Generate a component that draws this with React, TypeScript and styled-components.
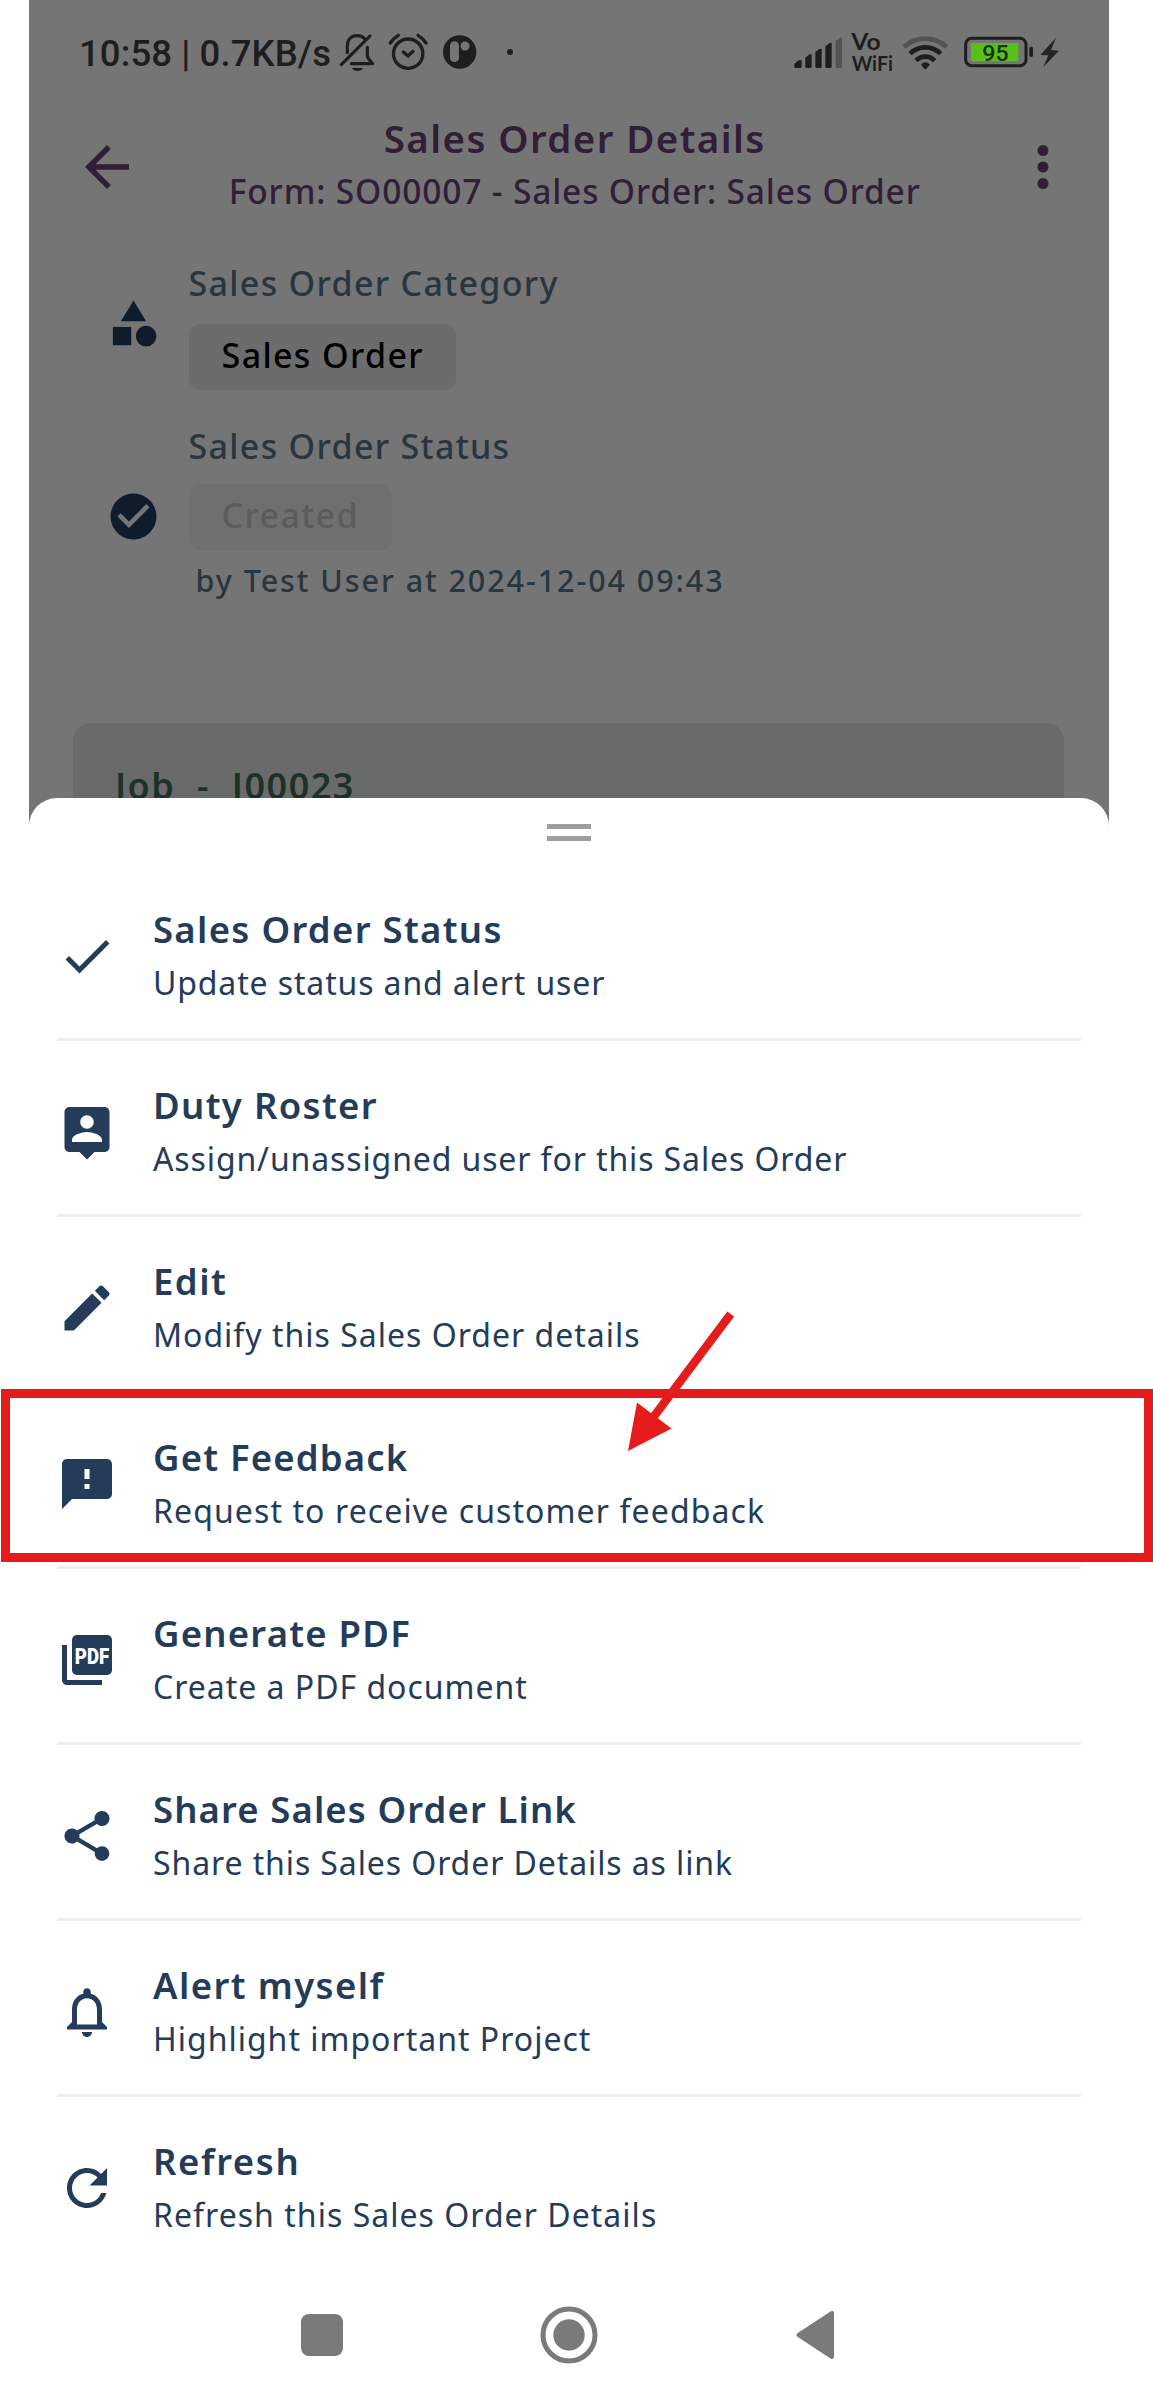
import React from "react";
import styled, { createGlobalStyle } from "styled-components";

const NAVY = "#243c5a";
const RED = "#e61c1c";
const INK = "#1e1e1e";
const DIMMED = "#757575";
const PLUM = "#311f38";

const GlobalStyle = createGlobalStyle`
  *, *::before, *::after { box-sizing: border-box; }
  body { margin: 0; background: #fff; }
`;

const Page = styled.div`
  position: relative;
  width: 1153px;
  height: 2400px;
  padding-left: 29px;
  overflow: hidden;
  background: #fff;
  font-family: "Noto Sans", "Open Sans", sans-serif;
`;

const Phone = styled.div`
  display: flex;
  flex-direction: column;
  width: 1080px;
  height: 2400px;
`;

const Backdrop = styled.div`
  display: flex;
  flex-direction: column;
  flex: none;
  height: 826px;
  overflow: hidden;
  background: ${DIMMED};
`;

/* Status bar */

const StatusBar = styled.div`
  display: flex;
  align-items: flex-start;
  flex: none;
  height: 111.6px;
  padding: 20px 49.7px 0 50px;
`;

const NetworkText = styled.span`
  flex: none;
  width: 260px;
  font: 500 36.5px/43px Roboto, sans-serif;
  letter-spacing: 0.1px;
  white-space: nowrap;
  color: ${INK};
  padding-top: 12px;
`;

const StatusIcon = styled.svg<{ $gap?: string }>`
  flex: none;
  height: 65px;
  margin-left: ${(p) => p.$gap ?? "0"};
  overflow: visible;
`;

/* App header */

const Header = styled.header`
  display: flex;
  align-items: center;
  flex: none;
  height: 106px;
  padding: 0 33px 0 44.5px;
  color: ${PLUM};
`;

const HeaderIcon = styled.svg`
  flex: none;
  width: 66px;
  height: 66px;
  margin-top: 5px;
  fill: currentColor;
`;

const HeaderTitles = styled.div`
  flex: 1;
  text-align: center;
  white-space: nowrap;
`;

const HeaderTitle = styled.h1`
  margin: 0;
  font-size: 38.5px;
  font-weight: 600;
  line-height: 52px;
  letter-spacing: 1.4px;
`;

const HeaderSubtitle = styled.p`
  margin: 0;
  font-size: 33.5px;
  font-weight: 500;
  line-height: 54px;
  letter-spacing: 0.85px;
`;

/* Order details */

const Detail = styled.section<{ $top: string }>`
  display: flex;
  flex: none;
  margin-top: ${(p) => p.$top};
  padding-left: 77px;
`;

const DetailIcon = styled.svg<{ $top: string }>`
  flex: none;
  width: 55px;
  height: 55px;
  margin: ${(p) => p.$top} 27.6px 0 0;
  fill: #0f1c2b;
`;

const DetailBody = styled.div`
  display: flex;
  flex-direction: column;
  align-items: flex-start;
  white-space: nowrap;
`;

const DetailLabel = styled.div<{ $gap: string }>`
  margin-bottom: ${(p) => p.$gap};
  font-size: 34px;
  font-weight: 500;
  line-height: 54px;
  letter-spacing: 1.3px;
  color: #29353f;
`;

const Pill = styled.div<{ $muted?: boolean; $width: string }>`
  width: ${(p) => p.$width};
  height: 66px;
  padding: 4px 0 0 33px;
  border-radius: 11px;
  background: ${(p) => (p.$muted ? "#6f6f6f" : "#6c6c6c")};
  font-size: 34px;
  font-weight: 500;
  line-height: 54px;
  letter-spacing: 1.35px;
  color: ${(p) => (p.$muted ? "#5c5c5c" : "#000")};
`;

const Byline = styled.div`
  margin-top: 6px;
  padding-left: 7px;
  font-size: 30.5px;
  font-weight: 500;
  line-height: 48px;
  letter-spacing: 1.93px;
  color: #29353f;
`;

const JobCard = styled.section`
  flex: none;
  height: 160px;
  margin: 119px 45px 0 44px;
  padding: 36.6px 0 0 42px;
  border-radius: 18px;
  background: #696b6a;
  font-size: 36px;
  font-weight: 600;
  line-height: 54px;
  letter-spacing: 1.5px;
  white-space: pre;
  color: #1e3128;
`;

/* Bottom sheet */

const Sheet = styled.div`
  display: flex;
  flex-direction: column;
  flex: 1;
  margin-top: -28px;
  border-radius: 28px 28px 0 0;
  background: #fff;
`;

const Handle = styled.div`
  align-self: center;
  flex: none;
  width: 44px;
  height: 17px;
  margin: 25.5px 0 24.5px;
  border: solid #9e9e9e;
  border-width: 5.5px 0;
`;

const Menu = styled.ul`
  margin: 0 28px;
  padding: 0;
  list-style: none;
`;

const MenuItem = styled.li`
  display: flex;
  align-items: flex-start;
  height: 176px;
  padding-top: 36px;
  border-bottom: 3px solid #eee;
  color: ${NAVY};

  &:last-child {
    border-bottom: 0;
  }
`;

const MenuIcon = styled.svg`
  flex: none;
  width: 60px;
  height: 60px;
  margin: 25px 36px 0 0;
  fill: currentColor;
`;

const MenuText = styled.div`
  padding-top: 1px;
  white-space: nowrap;
`;

const MenuTitle = styled.div<{ $track: number }>`
  font-size: 36.5px;
  font-weight: 600;
  line-height: 54px;
  letter-spacing: ${(p) => p.$track}px;
`;

const MenuNote = styled.div<{ $track: number }>`
  font-size: 32px;
  font-weight: 400;
  line-height: 53px;
  letter-spacing: ${(p) => p.$track}px;
`;

const NavBar = styled.nav`
  display: flex;
  align-items: center;
  justify-content: center;
  gap: 197.5px;
  height: 58px;
  margin-top: 33px;
  padding-right: 3px;
  fill: #7a7a7a;
`;

/* Callout drawn over the screen */

const CalloutBox = styled.div`
  position: absolute;
  top: 1389px;
  left: 1px;
  width: 1152px;
  height: 173px;
  border: 9px solid ${RED};
`;

const CalloutArrow = styled.svg`
  position: absolute;
  top: 1305px;
  left: 620px;
  width: 120px;
  height: 150px;
`;

type Entry = {
  title: string;
  note: string;
  titleTrack: number;
  noteTrack: number;
  icon: React.ReactNode;
};

const entries: Entry[] = [
  {
    title: "Sales Order Status",
    note: "Update status and alert user",
    titleTrack: 1.3,
    noteTrack: 0.87,
    icon: <path d="M9 16.17L4.83 12l-1.42 1.41L9 19 21 7l-1.41-1.41z" />,
  },
  {
    title: "Duty Roster",
    note: "Assign/unassigned user for this Sales Order",
    titleTrack: 1.33,
    noteTrack: 0.88,
    icon: (
      <path d="M19 2H5c-1.1 0-2 .9-2 2v14c0 1.1.9 2 2 2h4l3 3 3-3h4c1.1 0 2-.9 2-2V4c0-1.1-.9-2-2-2zm-7 3.3c1.49 0 2.7 1.21 2.7 2.7 0 1.49-1.21 2.7-2.7 2.7-1.49 0-2.7-1.21-2.7-2.7 0-1.49 1.21-2.7 2.7-2.7zM18 16H6v-.9c0-2 4-3.1 6-3.1s6 1.1 6 3.1v.9z" />
    ),
  },
  {
    title: "Edit",
    note: "Modify this Sales Order details",
    titleTrack: 1.5,
    noteTrack: 1.0,
    icon: (
      <path d="M3 17.25V21h3.75L17.81 9.94l-3.75-3.75L3 17.25zM20.71 7.04c.39-.39.39-1.02 0-1.41l-2.34-2.34c-.39-.39-1.02-.39-1.41 0l-1.83 1.83 3.75 3.75 1.83-1.83z" />
    ),
  },
  {
    title: "Get Feedback",
    note: "Request to receive customer feedback",
    titleTrack: 1.18,
    noteTrack: 1.1,
    icon: (
      <path d="M20 2H4c-1.1 0-1.99.9-1.99 2L2 22l4-4h14c1.1 0 2-.9 2-2V4c0-1.1-.9-2-2-2zm-7 12h-2v-2h2v2zm0-4h-2V6h2v4z" />
    ),
  },
  {
    title: "Generate PDF",
    note: "Create a PDF document",
    titleTrack: 1.22,
    noteTrack: 0.98,
    icon: (
      <>
        <path d="M4 6H2v14c0 1.1.9 2 2 2h14v-2H4V6z" />
        <rect x="6" y="2" width="16" height="16" rx="1.9" />
        <text
          x="7.1"
          y="13.4"
          fill="#fff"
          fontFamily="Roboto, sans-serif"
          fontSize="8.7"
          fontWeight="900"
          textLength="13.8"
          lengthAdjust="spacingAndGlyphs"
        >
          PDF
        </text>
      </>
    ),
  },
  {
    title: "Share Sales Order Link",
    note: "Share this Sales Order Details as link",
    titleTrack: 1.1,
    noteTrack: 0.9,
    icon: (
      <path d="M18 16.08c-.76 0-1.44.3-1.96.77L8.91 12.7c.05-.23.09-.46.09-.7s-.04-.47-.09-.7l7.05-4.11c.54.5 1.25.81 2.04.81 1.66 0 3-1.34 3-3s-1.34-3-3-3-3 1.34-3 3c0 .24.04.47.09.7L8.04 9.81C7.5 9.31 6.79 9 6 9c-1.66 0-3 1.34-3 3s1.34 3 3 3c.79 0 1.5-.31 2.04-.81l7.12 4.16c-.05.21-.08.43-.08.65 0 1.61 1.31 2.92 2.92 2.92s2.92-1.31 2.92-2.92-1.31-2.92-2.92-2.92z" />
    ),
  },
  {
    title: "Alert myself",
    note: "Highlight important Project",
    titleTrack: 1.4,
    noteTrack: 1.0,
    icon: (
      <path d="M12 22c1.1 0 2-.9 2-2h-4c0 1.1.9 2 2 2zm6-6v-5c0-3.07-1.63-5.64-4.5-6.32V4c0-.83-.67-1.5-1.5-1.5s-1.5.67-1.5 1.5v.68C7.64 5.36 6 7.92 6 11v5l-2 2v1h16v-1l-2-2zm-2 1H8v-6c0-2.48 1.51-4.5 4-4.5s4 2.02 4 4.5v6z" />
    ),
  },
  {
    title: "Refresh",
    note: "Refresh this Sales Order Details",
    titleTrack: 1.6,
    noteTrack: 1.03,
    icon: (
      <path d="M17.65 6.35C16.2 4.9 14.21 4 12 4c-4.42 0-7.99 3.58-7.99 8s3.57 8 7.99 8c3.73 0 6.84-2.55 7.73-6h-2.08c-.82 2.33-3.04 4-5.65 4-3.31 0-6-2.69-6-6s2.69-6 6-6c1.66 0 3.14.69 4.22 1.78L13 11h7V4l-2.35 2.35z" />
    ),
  },
];

function BellOff() {
  return (
    <StatusIcon width="36.67" viewBox="27 0 110 195" fill="none" stroke={INK} strokeWidth="9.5" strokeLinecap="round" strokeLinejoin="round">
      <path d="M52 98V78C52 58 64 47 82 47c9 0 16 3 21 8" />
      <path d="M112 82v24c0 6 2 9 5 12l11 13H64" />
      <path d="M34 134L120 48" />
      <path d="M66 144h33c-3 6-9 9-16.500 9s-14-3-16.500-9z" fill={INK} stroke="none" />
    </StatusIcon>
  );
}

function Alarm() {
  return (
    <StatusIcon $gap="11.7px" width="42.67" viewBox="172 0 128 195" fill="none" stroke={INK} strokeWidth="10" strokeLinecap="round" strokeLinejoin="round">
      <circle cx="235.5" cy="101" r="44" />
      <path d="M182 69c6-9 14-17 24-23M289 69c-6-9-14-17-24-23M221 96l14 12 15-14" />
    </StatusIcon>
  );
}

function Badge() {
  return (
    <StatusIcon $gap="13.3px" width="33.33" viewBox="340 0 100 195" fill={DIMMED}>
      <circle cx="390" cy="96" r="50" fill={INK} />
      <rect x="361" y="64" width="27" height="62" rx="13" />
      <circle cx="406" cy="78" r="13.5" />
    </StatusIcon>
  );
}

function Dot() {
  return (
    <StatusIcon $gap="30.3px" width="6" viewBox="531 0 18 195" fill={INK}>
      <circle cx="540" cy="96" r="9" />
    </StatusIcon>
  );
}

function Signal() {
  return (
    <StatusIcon $gap="auto" width="48.33" viewBox="42 0 145 195" fill={INK}>
      <path d="M43 140v-9l13-10h9v19q0 4-4 4H47q-4 0-4-4z" />
      <path d="M76 140v-27l13-10h6v37q0 4-4 4H80q-4 0-4-4z" />
      <path d="M106 140V96l13-10h6v54q0 4-4 4h-11q-4 0-4-4z" />
      <path d="M136 140V79l13-10h6v71q0 4-4 4h-11q-4 0-4-4z" />
      <path d="M167 140V63l13-10h6v87q0 4-4 4h-11q-4 0-4-4z" fill="#535353" />
    </StatusIcon>
  );
}

function VoWifi() {
  return (
    <StatusIcon $gap="8.4px" width="42.67" viewBox="212 0 128 195" fill={INK} fontFamily="Lato, sans-serif" fontWeight="700">
      <text x="213" y="89" fontSize="69" textLength="88" lengthAdjust="spacingAndGlyphs">Vo</text>
      <text x="214" y="152" fontSize="62" textLength="124" lengthAdjust="spacingAndGlyphs">WiFi</text>
    </StatusIcon>
  );
}

function Wifi() {
  return (
    <StatusIcon $gap="9px" width="46.67" viewBox="367 0 140 195" fill="none" stroke={INK} strokeWidth="14">
      <path d="M373 81a94 94 0 0 1 128 0" stroke="#535353" />
      <path d="M391 101a66 66 0 0 1 92 0" />
      <path d="M409 122a38 38 0 0 1 56 0" />
      <path d="M424 134q13-14 27 0l-11 12q-3 3-6 0z" fill={INK} stroke="none" />
    </StatusIcon>
  );
}

function Battery() {
  return (
    <StatusIcon $gap="14.7px" width="69.67" viewBox="551 0 209 195">
      <rect x="556" y="55" width="181" height="82" rx="18" fill="none" stroke={INK} strokeWidth="9" />
      <rect x="572" y="69" width="142" height="55" rx="4" fill="#58c01b" />
      <rect x="747" y="80" width="11" height="31" rx="5" fill={INK} />
      <text x="606" y="123" fontFamily="Roboto, sans-serif" fontSize="67" fontWeight="500" textLength="79" lengthAdjust="spacingAndGlyphs" fill="#162f08">95</text>
    </StatusIcon>
  );
}

function Bolt() {
  return (
    <StatusIcon $gap="6.7px" width="19.33" viewBox="780 0 58 195" fill="#242424">
      <path d="M828 53l-47 52 24 1-15 35 47-49-24-2z" />
    </StatusIcon>
  );
}

export default function App() {
  return (
    <>
      <GlobalStyle />
      <Page>
        <Phone>
          <Backdrop>
            <StatusBar>
              <NetworkText>10:58 | 0.7KB/s</NetworkText>
              <BellOff />
              <Alarm />
              <Badge />
              <Dot />
              <Signal />
              <VoWifi />
              <Wifi />
              <Battery />
              <Bolt />
            </StatusBar>

            <Header>
              <HeaderIcon viewBox="0 0 24 24">
                <path d="M20 11H7.83l5.59-5.59L12 4l-8 8 8 8 1.41-1.41L7.83 13H20v-2z" />
              </HeaderIcon>
              <HeaderTitles>
                <HeaderTitle>Sales Order Details</HeaderTitle>
                <HeaderSubtitle>Form: SO00007 - Sales Order: Sales Order</HeaderSubtitle>
              </HeaderTitles>
              <HeaderIcon viewBox="0 0 24 24">
                <circle cx="12" cy="6" r="2" />
                <circle cx="12" cy="12" r="2" />
                <circle cx="12" cy="18" r="2" />
              </HeaderIcon>
            </Header>

            <Detail $top="38px">
              <DetailIcon $top="40.5px" viewBox="0 0 24 24">
                <path d="M12 2l-5.5 9h11z" />
                <circle cx="17.5" cy="17.5" r="4.5" />
                <path d="M3 13.5h8v8H3z" />
              </DetailIcon>
              <DetailBody>
                <DetailLabel $gap="14.5px">Sales Order Category</DetailLabel>
                <Pill $width="267.4px">Sales Order</Pill>
              </DetailBody>
            </Detail>

            <Detail $top="28.5px">
              <DetailIcon $top="70.5px" viewBox="0 0 24 24">
                <path d="M12 2C6.48 2 2 6.48 2 12s4.48 10 10 10 10-4.48 10-10S17.52 2 12 2zm-2 15l-5-5 1.41-1.41L10 14.17l7.59-7.59L19 8l-9 9z" />
              </DetailIcon>
              <DetailBody>
                <DetailLabel $gap="11px">Sales Order Status</DetailLabel>
                <Pill $muted $width="203px">Created</Pill>
                <Byline>by Test User at 2024-12-04 09:43</Byline>
              </DetailBody>
            </Detail>

            <JobCard>{"Job  -  J00023"}</JobCard>
          </Backdrop>

          <Sheet>
            <Handle />
            <Menu>
              {entries.map((entry) => (
                <MenuItem key={entry.title}>
                  <MenuIcon viewBox="0 0 24 24">{entry.icon}</MenuIcon>
                  <MenuText>
                    <MenuTitle $track={entry.titleTrack}>{entry.title}</MenuTitle>
                    <MenuNote $track={entry.noteTrack}>{entry.note}</MenuNote>
                  </MenuText>
                </MenuItem>
              ))}
            </Menu>
            <NavBar>
              <svg width="42" height="42" viewBox="0 0 42 42">
                <rect width="42" height="42" rx="8" />
              </svg>
              <svg width="58" height="58" viewBox="0 0 58 58">
                <circle cx="29" cy="29" r="26" fill="none" stroke="#7a7a7a" strokeWidth="5" />
                <circle cx="29" cy="29" r="15.7" />
              </svg>
              <svg width="39" height="48" viewBox="0 0 39 48">
                <path d="M36 2v44L2.5 24z" stroke="#7a7a7a" strokeWidth="4" strokeLinejoin="round" />
              </svg>
            </NavBar>
          </Sheet>
        </Phone>

        <CalloutBox />
        <CalloutArrow viewBox="620 1305 120 150">
          <path d="M730.7 1314L652 1419" stroke={RED} strokeWidth="8.5" />
          <path d="M628 1451l9-48.5 34.5 26z" fill={RED} />
        </CalloutArrow>
      </Page>
    </>
  );
}
